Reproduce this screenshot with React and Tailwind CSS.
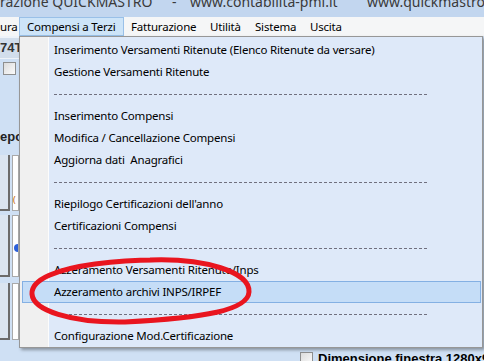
import React from 'react';

const items = [
  { t: 'Inserimento Versamenti Ritenute (Elenco Ritenute da versare)' },
  { t: 'Gestione Versamenti Ritenute' },
  { sep: true },
  { t: 'Inserimento Compensi' },
  { t: 'Modifica / Cancellazione Compensi' },
  { t: 'Aggiorna dati  Anagrafici' },
  { sep: true },
  { t: "Riepilogo Certificazioni dell'anno" },
  { t: 'Certificazioni Compensi' },
  { sep: true },
  { t: 'Azzeramento Versamenti Ritenute/Inps' },
  { t: 'Azzeramento archivi INPS/IRPEF', active: true },
  { sep: true },
  { t: 'Configurazione Mod.Certificazione' },
];

const MenuRow = ({ item }) => {
  if (item.sep) {
    return (
      <div className="h-[22px] flex items-center ml-[2px] mr-[1px]">
        <div className="ml-[32px] w-[374px] h-px bg-[repeating-linear-gradient(90deg,#70707f_0_3px,transparent_3px_5px)]" />
      </div>
    );
  }
  return (
    <div
      className={`h-[22px] flex items-center ml-[2px] mr-[1px] pl-[31px] border whitespace-pre ${
        item.active ? 'bg-[#c5ddf7] border-[#84b0e3]' : 'border-transparent'
      }`}
    >
      {item.t}
    </div>
  );
};

const Checkbox = ({ className }) => (
  <div className={`w-[13px] h-[13px] shrink-0 border border-[#8e8f8f] bg-[linear-gradient(135deg,#dcdcdc,#fbfbfb)] ${className || ''}`} />
);

export default function App() {
  return (
    <div className="relative w-[484px] h-[361px] overflow-hidden bg-[#cfe0f4] font-['Noto_Sans',sans-serif] text-black">
      {/* barra del titolo */}
      <div className="h-[17px] bg-[#c2d6ef] overflow-hidden">
        <div className="flex whitespace-pre text-[14px] leading-[18px] text-[#3a3a3a] -mt-[7px]">
          <span className="w-[172px] shrink-0">razione QUICKMASTRO</span>
          <span className="w-[18px] shrink-0">-</span>
          <span className="w-[177px] shrink-0">www.contabilita-pmi.it</span>
          <span className="shrink-0">www.quickmastro</span>
        </div>
      </div>

      {/* barra menu */}
      <div className="h-[19px] bg-[#f5f6f7] flex text-[11.5px] tracking-[-0.2px] leading-[17px]">
        <div className="w-[19px] shrink-0 pt-px">ura</div>
        <div className="w-[105px] shrink-0 pl-[7px] border border-[#99c0e8] bg-[#cde4f8]">Compensi a Terzi</div>
        <div className="w-[79px] shrink-0 pl-[7px] pt-px">Fatturazione</div>
        <div className="w-[45px] shrink-0 pl-[7px] pt-px">Utilità</div>
        <div className="w-[55px] shrink-0 pl-[7px] pt-px">Sistema</div>
        <div className="shrink-0 pl-[7px] pt-px">Uscita</div>
      </div>

      {/* finestra sotto */}
      <div className="h-[312px] flex">
        <div className="w-[19px] shrink-0 flex flex-col">
          <div className="h-[2px] bg-[#eef3f9]" />
          <div className="h-[20px] bg-[#d2deec] font-['Liberation_Sans',sans-serif] font-bold text-[13px] leading-[20px] text-[#333]">74T</div>
          <div className="h-px bg-[#eef3f9]" />
          <div className="h-[25px] pt-[3px] pl-[3px]">
            <Checkbox />
          </div>
          <div className="h-[47px]" />
          <div className="h-[12px] font-['Liberation_Sans',sans-serif] font-bold text-[13px] leading-[12px] text-[#222]">epo</div>
          <div className="h-[12px]" />
          <div className="h-[56px] flex gap-[2px]">
            <div className="w-[10px] bg-[#dbe5f1] border-r-2 border-b-2 border-[#6b6b6b]" />
            <div className="flex-1 bg-white border border-[#a9a9a9] flex items-end pb-[6px] text-[9px] text-[#c06000] leading-[9px]">(</div>
          </div>
          <div className="h-[4px]" />
          <div className="h-[62px] flex gap-[2px]">
            <div className="w-[10px] bg-[#dbe5f1] border-r-2 border-b-2 border-[#6b6b6b]" />
            <div className="flex-1 bg-white border border-[#a9a9a9] flex justify-end pt-[28px]">
              <div className="w-[4px] h-[8px] rounded-l-full bg-[#2b5fd9]" />
            </div>
          </div>
          <div className="h-[6px]" />
          <div className="h-[57px] flex gap-[2px]">
            <div className="w-[10px] bg-[#dbe5f1] border-r-2 border-b-2 border-[#6b6b6b]" />
            <div className="flex-1 bg-white border border-[#a9a9a9]" />
          </div>
        </div>
      </div>

      {/* riga in basso */}
      <div className="h-[13px] flex pl-[300px] pt-[4px]">
        <Checkbox className="bg-white" />
        <div className="ml-[5px] -mt-px font-['Liberation_Sans',sans-serif] font-bold text-[13px] leading-[15px] whitespace-nowrap">
          Dimensione finestra 1280x900
        </div>
      </div>

      {/* menu a tendina */}
      <div className="absolute left-[19px] top-[36px] w-[464px] h-[312px] border border-[#979797] pt-[2px] text-[11.5px] tracking-[-0.2px] bg-[linear-gradient(90deg,#f0f0f0_0_28px,#fcfcfc_28px_29px,#dee9f9_29px)] shadow-[2px_2px_3px_rgba(0,0,0,0.35)]">
        {items.map((it, i) => (
          <MenuRow key={i} item={it} />
        ))}
      </div>

      {/* cerchio rosso */}
      <svg className="absolute left-0 top-0 pointer-events-none" width="484" height="361">
        <path
          d="M150 260 C205 258 250 272 249 292 C248 310 205 318 125 322 C70 323 33 310 32 294 C31 279 58 269 95 264 C118 261 135 260 155 260"
          fill="none"
          stroke="#e9151f"
          strokeWidth="5"
        />
      </svg>
    </div>
  );
}
